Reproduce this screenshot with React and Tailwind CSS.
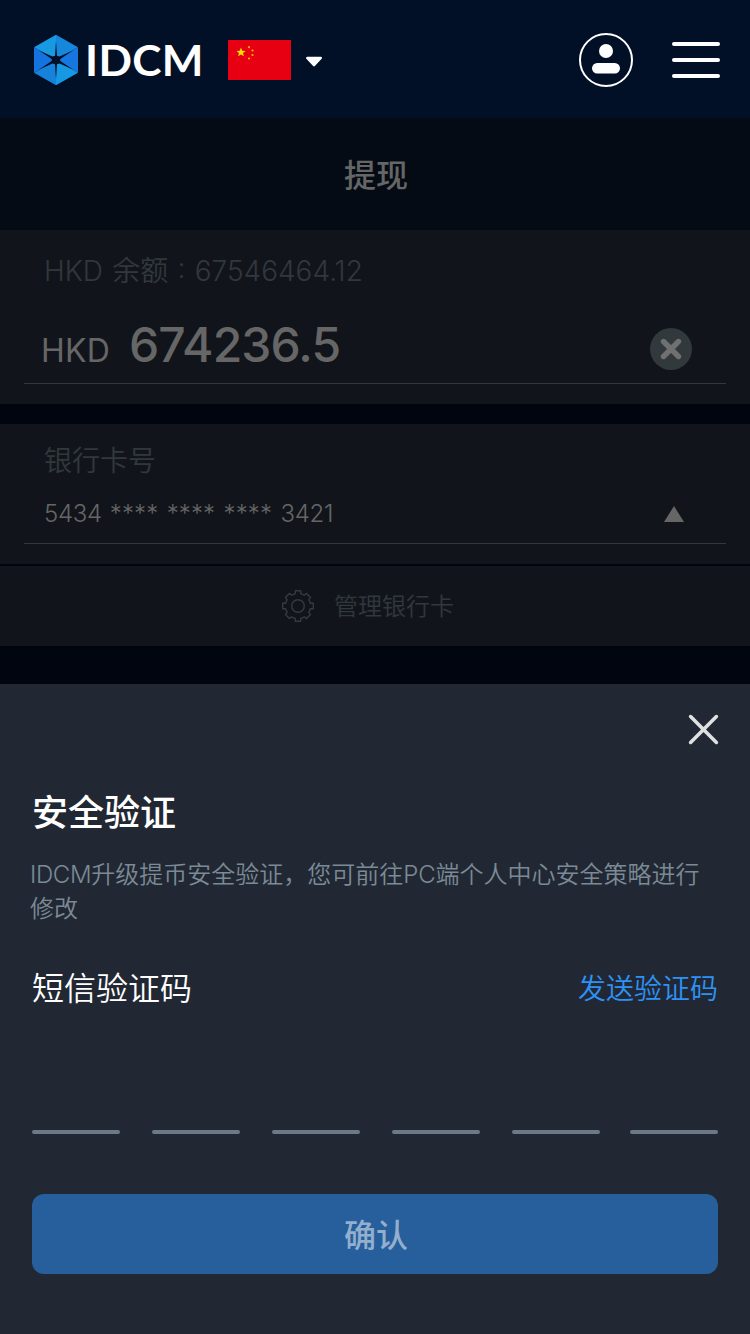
function Logo() {
  return (
    <svg className="h-[52px] w-[46px] shrink-0" viewBox="0 0 46 52">
      <path d="M23 .8 L23 26 L1 13.2Z" fill="#179ae2" />
      <path d="M23 .8 L45 13.2 L23 26Z" fill="#1787dc" />
      <path d="M45 13.2 L45 38.8 L23 26Z" fill="#1577df" />
      <path d="M45 38.8 L23 51.2 L23 26Z" fill="#1798e2" />
      <path d="M23 51.2 L1 38.8 L23 26Z" fill="#1782d9" />
      <path d="M1 13.2 L23 26 L1 38.8Z" fill="#1473de" />
      <path
        d="M23 7 L24 21.8 L26.5 22.6 L40 16.5 L28 24.6 L26.8 26 L28 27.4 L40 35.5 L26.5 29.4 L24 30.2 L23 45 L22 30.2 L19.5 29.4 L6 35.5 L18 27.4 L19.2 26 L18 24.6 L6 16.5 L19.5 22.6 L22 21.8Z"
        fill="#021027"
      />
    </svg>
  );
}

function Flag() {
  return (
    <svg className="h-10 w-[63px] shrink-0" viewBox="0 0 63 40">
      <rect width="63" height="40" fill="#e60012" />
      <path d="M13 7.6 L14.2 10.7 L17.6 10.9 L15 13 L15.9 16.2 L13 14.4 L10.1 16.2 L11 13 L8.4 10.9 L11.8 10.7Z" fill="#ffe100" />
      <g fill="#f5b800">
        <circle cx="21" cy="7.2" r="1.1" />
        <circle cx="24.5" cy="10.5" r="1.1" />
        <circle cx="24.5" cy="15" r="1.1" />
        <circle cx="21" cy="18.5" r="1.1" />
      </g>
    </svg>
  );
}

function Header() {
  return (
    <header className="flex h-[118px] shrink-0 items-center bg-[#021027] pt-0.5 pr-[30px] pl-[33px]">
      <Logo />
      <span className="ml-[5px] w-[119px] origin-left scale-x-[1.05] pl-px font-['Lato',sans-serif] text-[42px] leading-[50px] font-bold tracking-[0.3px] text-white">IDCM</span>
      <span className="ml-[25px]">
        <Flag />
      </span>
      <svg className="mt-[3px] ml-[14px] h-3 w-[18px]" viewBox="0 0 18 12">
        <path d="M2.2 2 H15.8 L9 9.2Z" fill="#fff" stroke="#fff" strokeWidth="2.4" strokeLinejoin="round" />
      </svg>
      <svg className="ml-auto h-[54px] w-[54px]" viewBox="0 0 54 54">
        <circle cx="27" cy="27" r="26" fill="none" stroke="#fff" strokeWidth="2" />
        <circle cx="27" cy="18" r="7" fill="#fff" />
        <rect x="13" y="30" width="28" height="10.5" rx="5.2" fill="#fff" />
      </svg>
      <div className="ml-[39px] flex w-12 flex-col gap-3">
        <i className="h-1 rounded-full bg-white" />
        <i className="h-1 rounded-full bg-white" />
        <i className="h-1 rounded-full bg-white" />
      </div>
    </header>
  );
}

function Gear() {
  return (
    <svg className="h-8 w-8" viewBox="0 0 32 32" fill="none" stroke="#343b3f" strokeWidth="1.4" strokeLinejoin="round">
      <path d="M13.3 .7H18.7V3.6Q20.8 4.2 22.4 5.2L24.6 3.4L28.6 7.4L26.8 9.6Q27.9 11.3 28.4 13.3H31.3V18.7H28.4Q27.9 20.7 26.8 22.4L28.6 24.6L24.6 28.6L22.4 26.8Q20.7 27.9 18.7 28.4V31.3H13.3V28.4Q11.3 27.9 9.6 26.8L7.4 28.6L3.4 24.6L5.2 22.4Q4.1 20.7 3.6 18.7H.7V13.3H3.6Q4.1 11.3 5.2 9.6L3.4 7.4L7.4 3.4L9.6 5.2Q11.3 4.2 13.3 3.6Z" />
      <circle cx="16" cy="16" r="6.3" />
    </svg>
  );
}

function Sheet() {
  return (
    <section className="flex flex-1 flex-col bg-[#212833] px-8">
      <div className="flex h-[92px] justify-end pt-[30px]">
        <svg className="-mr-0.5 h-8 w-8" viewBox="0 0 32 32">
          <path d="M2.6 2.6 L28.4 28.4 M28.4 2.6 L2.6 28.4" stroke="#e0e0e0" strokeWidth="3.6" strokeLinecap="round" />
        </svg>
      </div>
      <h2 className="h-[82px] pt-[11px] text-[36px] leading-[52px] font-medium text-white">安全验证</h2>
      <p className="-mr-2 -ml-0.5 h-[104px] text-[24px] leading-[34px] font-[350] text-[#7b8a96]">
        <span className="tracking-[-0.35px]">IDCM</span>升级提币安全验证，您可前往<span className="tracking-[-0.1px]">PC</span>端个人中心安全策略进行
        <br />
        修改
      </p>
      <div className="flex h-[52px] items-center justify-between font-[350]">
        <span className="pt-px text-[32px] text-white">短信验证码</span>
        <button className="pt-0.5 text-[28px] text-[#2d92f6]">发送验证码</button>
      </div>
      <div className="mt-[116px] flex gap-8">
        <i className="h-1 w-[88px] rounded-full bg-[#6b7886]" />
        <i className="h-1 w-[88px] rounded-full bg-[#6b7886]" />
        <i className="h-1 w-[88px] rounded-full bg-[#6b7886]" />
        <i className="h-1 w-[88px] rounded-full bg-[#6b7886]" />
        <i className="h-1 w-[88px] rounded-full bg-[#6b7886]" />
        <i className="-ml-0.5 h-1 w-[88px] rounded-full bg-[#6b7886]" />
      </div>
      <button className="mt-[60px] h-20 rounded-xl bg-[#265f9b] pt-1 pl-0.5 text-[32px] font-medium text-[#93afcd]">确认</button>
    </section>
  );
}

export default function App() {
  return (
    <main className="flex h-[1334px] w-[750px] flex-col overflow-hidden bg-[#01050f] font-['Inter','Noto_Sans_CJK_SC',sans-serif]">
      <Header />
      <h1 className="flex h-28 shrink-0 items-center justify-center bg-[#040b14] pt-1 pl-0.5 text-[32px] font-medium text-[#666666]">提现</h1>
      <section className="h-[174px] shrink-0 bg-[#11151b] px-6">
        <div className="flex h-[80px] items-center pt-0.5 pl-5 text-[28px] font-[350] [word-spacing:1.4px] whitespace-pre text-[#31383b]">HKD 余额 : 67546464.12</div>
        <div className="flex h-[74px] items-center border-b border-[#35393d] pr-[34px] pl-[17px] text-[#666666]">
          <span className="pt-2 text-[32px] tracking-[0.2px]">HKD</span>
          <span className="ml-[19px] pb-[3px] text-[48px] font-medium tracking-[-0.9px]">674236.5</span>
          <svg className="mt-1 ml-auto h-[42px] w-[42px]" viewBox="0 0 42 42">
            <circle cx="21" cy="21" r="21" fill="#31393d" />
            <path d="M13.5 13.5 L28.5 28.5 M28.5 13.5 L13.5 28.5" stroke="#707070" strokeWidth="5.4" strokeLinecap="round" />
          </svg>
        </div>
      </section>
      <section className="mt-5 h-[140px] shrink-0 bg-[#11151b] px-6">
        <div className="flex h-[72px] items-center pt-0.5 pl-5 text-[28px] font-[350] text-[#31383b]">银行卡号</div>
        <div className="flex h-12 items-center justify-between border-b border-[#35393d] pr-[42px] pb-3 pl-5 text-[24px] font-[350] text-[#666666]">
          <span className="tracking-[-0.3px] [word-spacing:1.6px]">
            5434 <span className="tracking-[0.1px]">**** **** **** </span>3421
          </span>
          <svg className="h-4 w-5" viewBox="0 0 20 16">
            <path d="M10 0 L20 16 H0Z" fill="#666" />
          </svg>
        </div>
      </section>
      <div className="mt-0.5 mb-[38px] flex h-20 shrink-0 items-center bg-[#11151b] pl-[282px] text-[24px] font-[350] text-[#31383b]">
        <Gear />
        <span className="ml-5 pt-0.5">管理银行卡</span>
      </div>
      <Sheet />
    </main>
  );
}
